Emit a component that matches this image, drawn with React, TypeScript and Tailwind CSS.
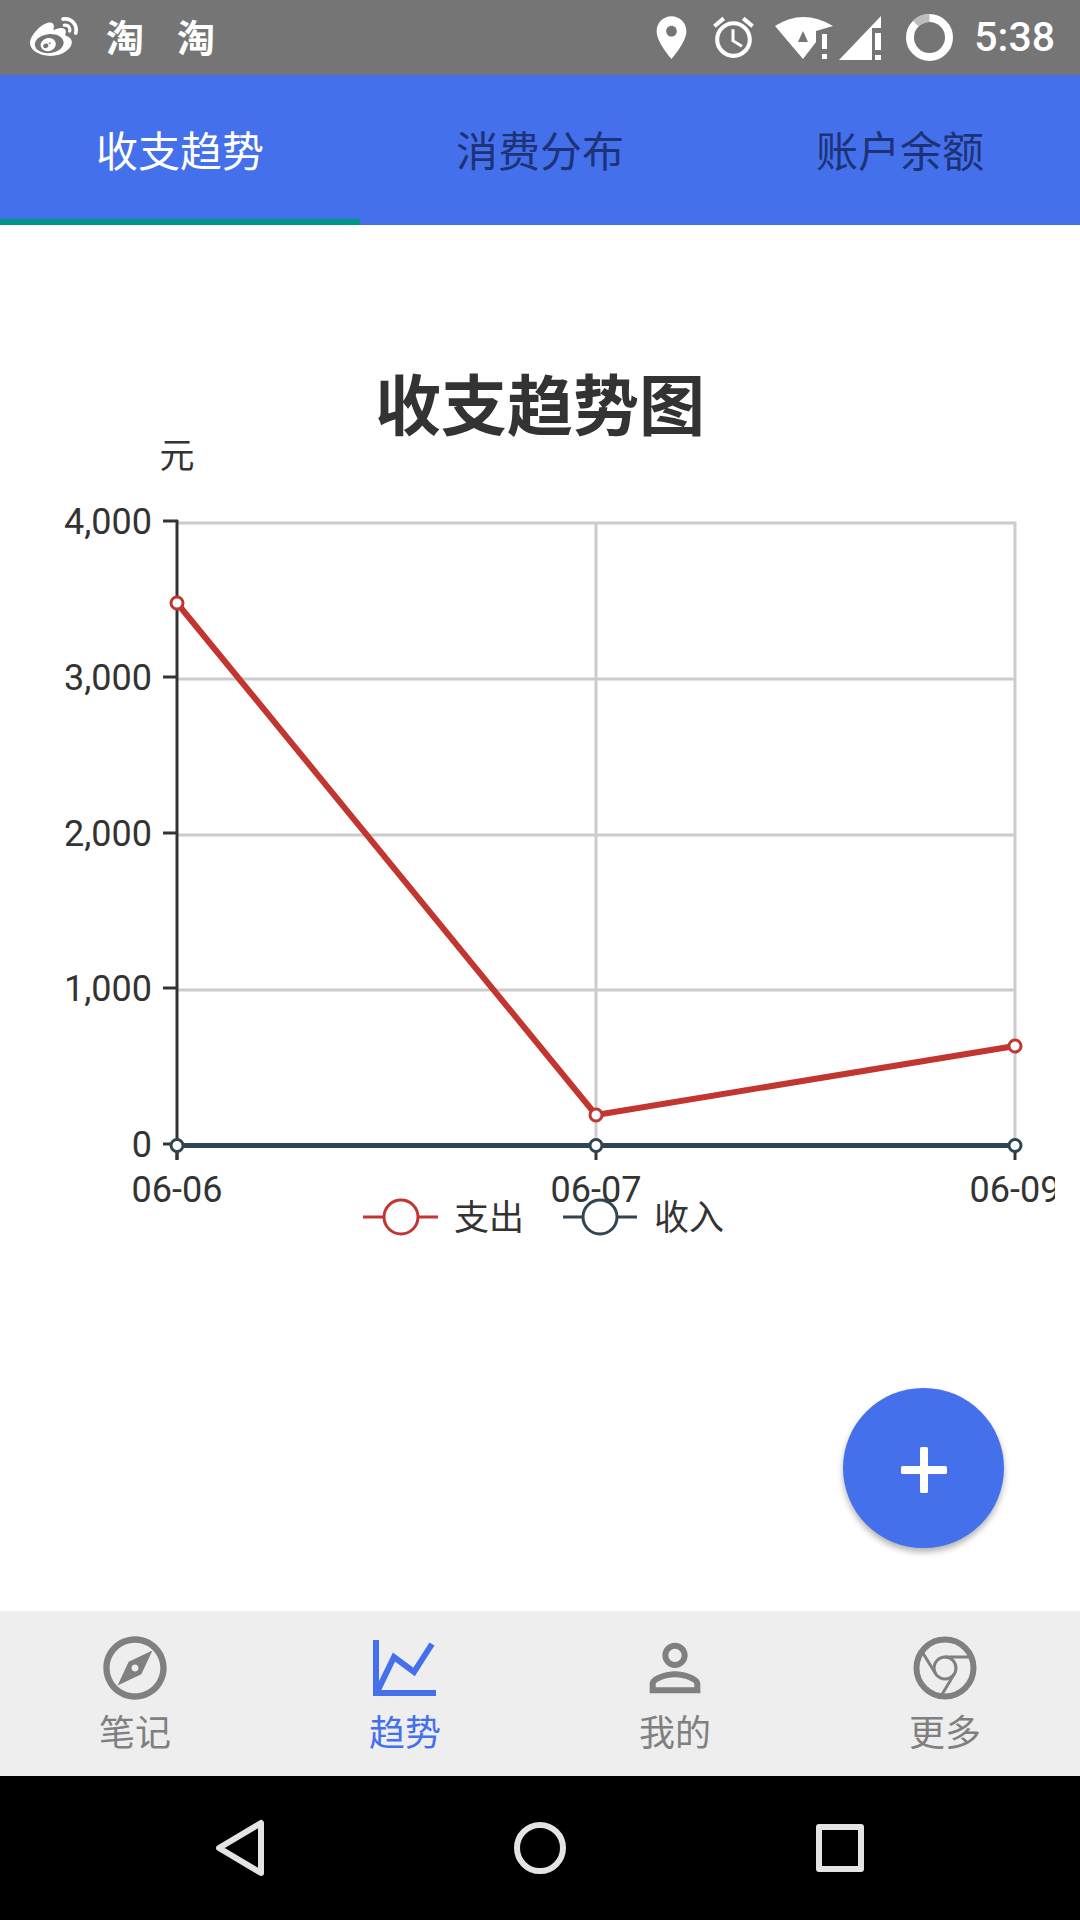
import React from 'react';
import { FaWeibo } from 'react-icons/fa';

const TABS = ['收支趋势', '消费分布', '账户余额'];

const StatusBar = () => (
  <div className="h-[75px] shrink-0 bg-[#757575] flex items-center text-white">
    <FaWeibo className="ml-[30px] w-[48px] h-[48px]" />
    <span className="ml-[28px] mt-[2px] w-[38px] text-[38px] leading-none font-bold">淘</span>
    <span className="ml-[33px] mt-[2px] w-[38px] text-[38px] leading-none font-bold">淘</span>

    <svg className="ml-auto w-[51px] h-[51px]" viewBox="0 0 24 24" fill="currentColor">
      <path d="M12 2C8.13 2 5 5.13 5 9c0 5.25 7 13 7 13s7-7.75 7-13c0-3.87-3.13-7-7-7zm0 9.5c-1.38 0-2.5-1.12-2.5-2.5s1.12-2.5 2.5-2.5 2.5 1.12 2.5 2.5-1.12 2.5-2.5 2.5z" />
    </svg>
    <svg className="ml-[12px] w-[49px] h-[49px]" viewBox="0 0 24 24" fill="currentColor">
      <path d="M22 5.72l-4.6-3.86-1.29 1.53 4.6 3.86L22 5.72zM7.88 3.39L6.6 1.86 2 5.71l1.29 1.53 4.59-3.85zM12.5 8H11v6l4.75 2.85.75-1.23-4-2.37V8zM12 4c-4.97 0-9 4.03-9 9s4.03 9 9 9 9-4.03 9-9-4.03-9-9-9zm0 16c-3.87 0-7-3.13-7-7s3.13-7 7-7 7 3.13 7 7-3.13 7-7 7z" />
    </svg>
    {/* wifi with no-internet mark */}
    <svg className="ml-[17px] w-[58px] h-[44px]" viewBox="0 0 58 44" fill="currentColor">
      <path d="M0 10 Q28 -8 58 10 L41 15 L41 26 L28 43 Z" />
      <path d="M23 26 L28 15 L33 26 Z" fill="#757575" />
      <rect x="47" y="18" width="5" height="15" />
      <rect x="47" y="38" width="5" height="5" />
    </svg>
    <svg className="ml-[6px] w-[42px] h-[44px]" viewBox="0 0 42 44" fill="currentColor">
      <path d="M42 0 L42 12 L33 12 L33 44 L0 44 Z" />
      <rect x="36" y="17" width="6" height="17" />
      <rect x="36" y="39" width="6" height="5" />
    </svg>
    <svg className="ml-[25px] w-[47px] h-[47px]" viewBox="0 0 47 47" fill="none" strokeWidth="8">
      <circle cx="23.5" cy="23.5" r="19.5" stroke="#ffffff" />
      <path d="M23.5 4 A19.5 19.5 0 0 0 9.7 9.7" stroke="#bdbdbd" />
    </svg>
    <span className="ml-[21px] mr-[25px] text-[41px] leading-none font-medium">5:38</span>
  </div>
);

const TabBar = () => (
  <div className="h-[150px] shrink-0 bg-[#4470ec] grid grid-cols-3">
    {TABS.map((t, i) => (
      <div
        key={t}
        className={
          i === 0
            ? 'flex items-center justify-center pt-[10px] text-[42px] text-white border-b-[6px] border-[#009688]'
            : 'flex items-center justify-center pt-[10px] text-[42px] text-[#1e3278] border-b-[6px] border-transparent'
        }
      >
        {t}
      </div>
    ))}
  </div>
);

const Chart = () => {
  const gridY = [523, 679, 835, 990, 1145.5];
  const tickY = [521, 677, 833, 988, 1144];
  const yLabels = ['4,000', '3,000', '2,000', '1,000', '0'];
  const xs = [177, 596, 1015];
  const xLabels = ['06-06', '06-07', '06-09'];
  const red = [603, 1115, 1046];

  return (
    <svg className="block w-[1055px] h-[810px]" viewBox="0 435 1055 810">
      <text x="177" y="456" textAnchor="middle" dominantBaseline="central" fontSize="35" fill="#333">元</text>

      {/* grid */}
      {gridY.map((y) => (
        <line key={y} x1="177" x2="1016" y1={y} y2={y} stroke="#ccc" strokeWidth="3" />
      ))}
      {xs.slice(1).map((x) => (
        <line key={x} x1={x} x2={x} y1="522" y2="1146" stroke="#ccc" strokeWidth="3" />
      ))}

      {/* axes */}
      <line x1="177" x2="177" y1="520" y2="1160" stroke="#333" strokeWidth="3" />
      {tickY.map((y) => (
        <line key={y} x1="163" x2="178" y1={y} y2={y} stroke="#333" strokeWidth="3" />
      ))}
      {xs.map((x) => (
        <line key={x} x1={x} x2={x} y1="1145" y2="1160" stroke="#333" strokeWidth="3" />
      ))}
      {yLabels.map((l, i) => (
        <text key={l} x="152" y={tickY[i] + 1} textAnchor="end" dominantBaseline="central" fontSize="36" fill="#333">
          {l}
        </text>
      ))}
      {xLabels.map((l, i) => (
        <text key={l} x={xs[i]} y="1190" textAnchor="middle" dominantBaseline="central" fontSize="36" fill="#333">
          {l}
        </text>
      ))}

      {/* series */}
      <polyline points={`${xs[0]},${red[0]} ${xs[1]},${red[1]} ${xs[2]},${red[2]}`} fill="none" stroke="#c23531" strokeWidth="6" />
      <line x1={xs[0]} x2={xs[2]} y1="1145.5" y2="1145.5" stroke="#2f4554" strokeWidth="5" />
      {xs.map((x, i) => (
        <circle key={x} cx={x} cy={red[i]} r="6" fill="#fff" stroke="#c23531" strokeWidth="3" />
      ))}
      {xs.map((x) => (
        <circle key={x} cx={x} cy="1145.5" r="6" fill="#fff" stroke="#2f4554" strokeWidth="3" />
      ))}

      {/* legend */}
      <line x1="363" x2="438" y1="1217" y2="1217" stroke="#c23531" strokeWidth="3" />
      <circle cx="401" cy="1217" r="17" fill="#fff" stroke="#c23531" strokeWidth="3" />
      <text x="454" y="1218" dominantBaseline="central" fontSize="35" fill="#333">支出</text>
      <line x1="563" x2="637" y1="1217" y2="1217" stroke="#2f4554" strokeWidth="3" />
      <circle cx="600" cy="1217" r="17" fill="#fff" stroke="#2f4554" strokeWidth="3" />
      <text x="654" y="1218" dominantBaseline="central" fontSize="35" fill="#333">收入</text>
    </svg>
  );
};

const NavItem = ({ label, active, children }: { label: string; active?: boolean; children: React.ReactNode }) => (
  <div className={active ? 'flex flex-col items-center pt-[19px] text-[#4470ec]' : 'flex flex-col items-center pt-[19px] text-[#808080]'}>
    <div className="w-[76px] h-[76px]">{children}</div>
    <span className="mt-[2px] text-[36px] leading-[52px]">{label}</span>
  </div>
);

const BottomBar = () => (
  <div className="h-[165px] shrink-0 bg-[#eeeeee] grid grid-cols-4">
    <NavItem label="笔记">
      <svg viewBox="0 0 24 24" className="w-full h-full" fill="currentColor">
        <path d="M12 2C6.48 2 2 6.48 2 12s4.48 10 10 10 10-4.48 10-10S17.52 2 12 2zm0 18c-4.41 0-8-3.59-8-8s3.59-8 8-8 8 3.59 8 8-3.59 8-8 8zm-5.5-2.5l7.51-3.49L17.5 6.5 9.99 9.99 6.5 17.5zm5.5-6.6c.61 0 1.1.49 1.1 1.1s-.49 1.1-1.1 1.1-1.1-.49-1.1-1.1.49-1.1 1.1-1.1z" />
      </svg>
    </NavItem>
    <NavItem label="趋势" active>
      <svg viewBox="0 0 76 76" className="w-full h-full" fill="none" stroke="currentColor" strokeWidth="6">
        <path d="M9 10 V63 H69" />
        <path d="M11 60 L27 27 L47 42 L65 14" />
      </svg>
    </NavItem>
    <NavItem label="我的">
      <svg viewBox="0 0 24 24" className="w-full h-full" fill="currentColor">
        <path d="M12 5.9c1.16 0 2.1.94 2.1 2.1s-.94 2.1-2.1 2.1S9.9 9.16 9.9 8s.94-2.1 2.1-2.1m0 9c2.97 0 6.1 1.46 6.1 2.1v1.1H5.9V17c0-.64 3.13-2.1 6.1-2.1M12 4C9.79 4 8 5.79 8 8s1.79 4 4 4 4-1.79 4-4-1.79-4-4-4zm0 9c-2.67 0-8 1.34-8 4v3h16v-3c0-2.66-5.33-4-8-4z" />
      </svg>
    </NavItem>
    <NavItem label="更多">
      <svg viewBox="-38 -38 76 76" className="w-full h-full" fill="none" stroke="currentColor">
        <circle r="28.5" strokeWidth="6" />
        <circle r="11" strokeWidth="3" />
        <path d="M0 -11 H28 M9.5 5.5 L-4.5 29 M-9.5 5.5 L-24 -18" strokeWidth="3" />
      </svg>
    </NavItem>
  </div>
);

const SystemNav = () => (
  <div className="h-[144px] shrink-0 bg-black grid grid-cols-3 px-[90px] items-center">
    <svg className="justify-self-center w-[60px] h-[60px]" viewBox="0 0 60 60" fill="none" stroke="#e4e4e4" strokeWidth="6" strokeLinejoin="round">
      <path d="M51 5 L51 55 L9 30 Z" />
    </svg>
    <svg className="justify-self-center w-[60px] h-[60px]" viewBox="0 0 60 60" fill="none" stroke="#e4e4e4" strokeWidth="6">
      <circle cx="30" cy="30" r="23" />
    </svg>
    <svg className="justify-self-center w-[60px] h-[60px]" viewBox="0 0 60 60" fill="none" stroke="#e4e4e4" strokeWidth="6" strokeLinejoin="round">
      <rect x="9" y="9" width="42" height="42" />
    </svg>
  </div>
);

export default function App() {
  return (
    <div className="w-[1080px] h-[1920px] flex flex-col overflow-hidden bg-white font-['Roboto','Noto_Sans_CJK_SC',sans-serif]">
      <StatusBar />
      <TabBar />
      <main className="relative flex-1 min-h-0 bg-white">
        <h1 className="pt-[143px] h-[210px] leading-[80px] text-center text-[66px] font-bold text-[#333333]">收支趋势图</h1>
        <Chart />
        <button className="absolute right-[76px] bottom-[63px] w-[161px] h-[160px] rounded-full bg-[#4470ec] shadow-[0_4px_6px_rgba(0,0,0,0.3)] flex items-center justify-center">
          <svg className="w-[46px] h-[46px] mt-[4px]" viewBox="0 0 46 46" fill="#ffffff">
            <rect x="0" y="19" width="46" height="8" rx="1.5" />
            <rect x="19" y="0" width="8" height="46" rx="1.5" />
          </svg>
        </button>
      </main>
      <BottomBar />
      <SystemNav />
    </div>
  );
}
